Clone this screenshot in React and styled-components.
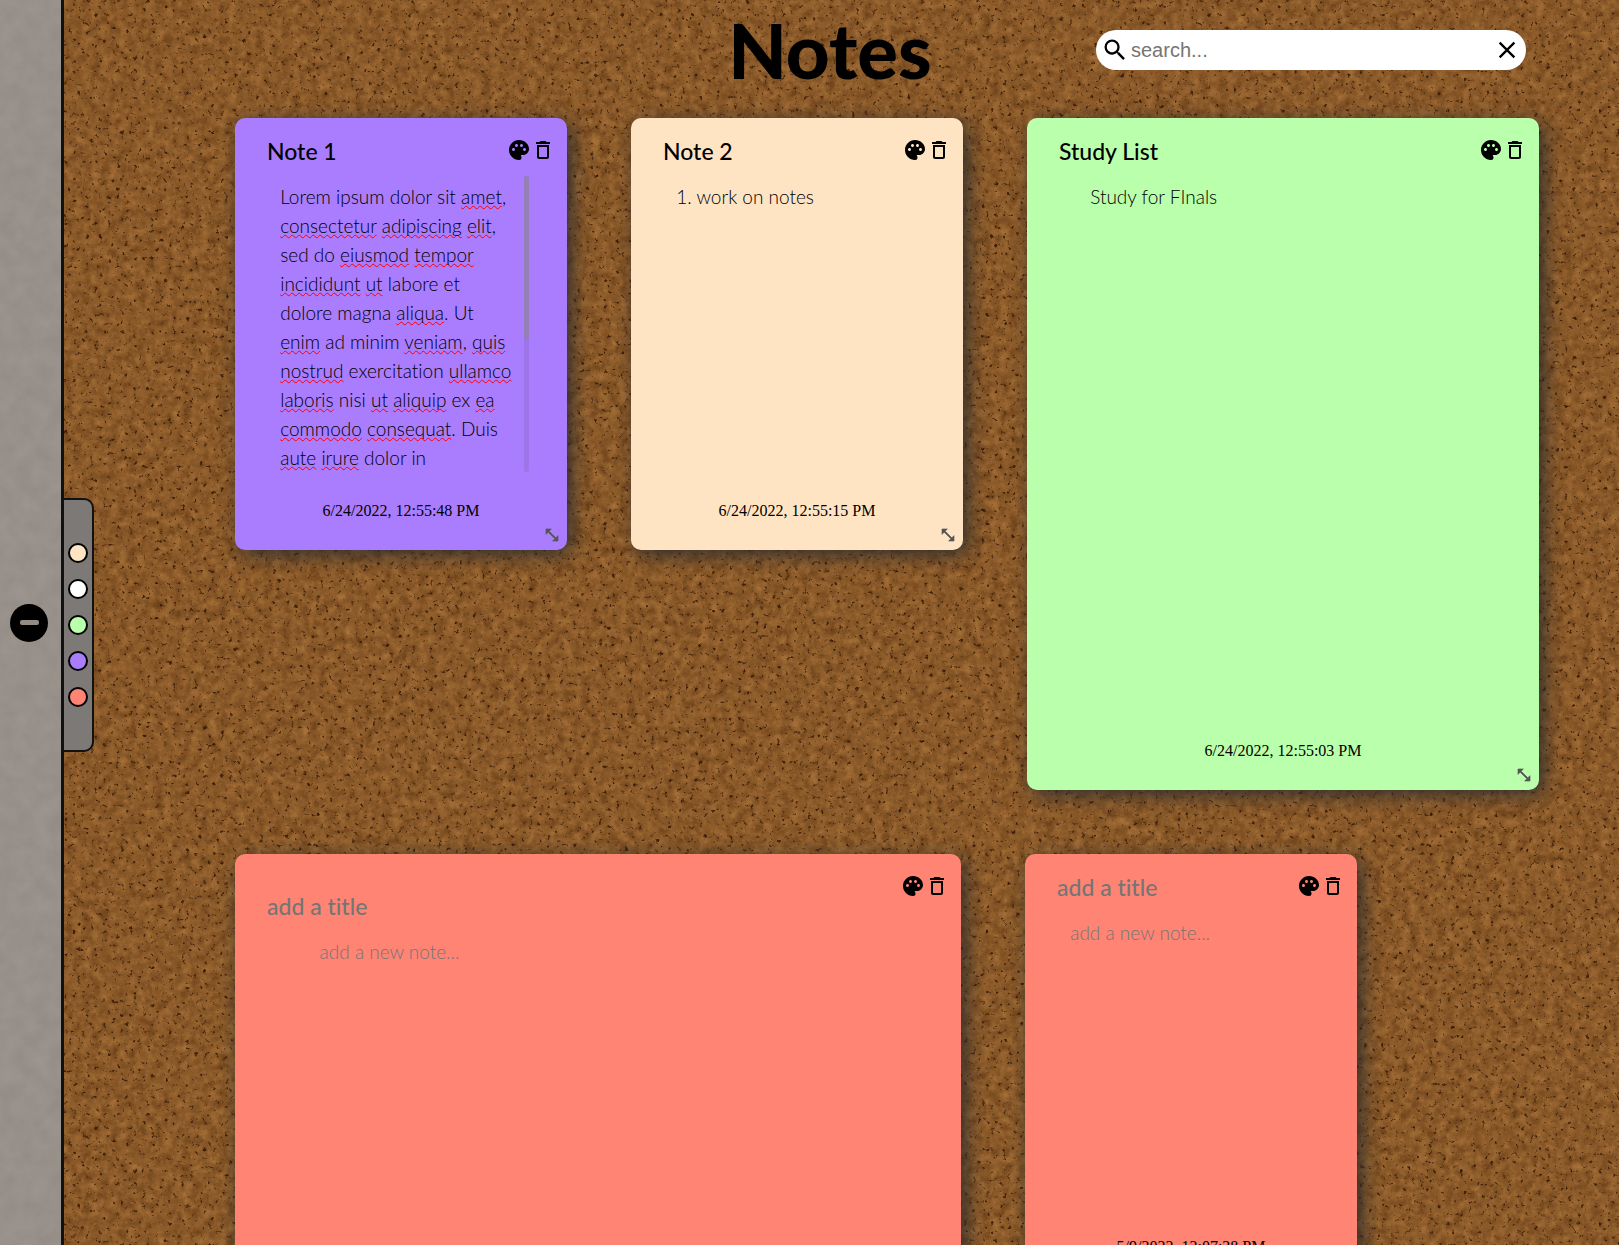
import React from "react";
import styled, { createGlobalStyle } from "styled-components";
import { MdPalette, MdDeleteOutline, MdSearch, MdClose } from "react-icons/md";

const GlobalStyle = createGlobalStyle`
  *, *::before, *::after { box-sizing: border-box; }
  body { margin: 0; background: #8a592b; }
  button, input, textarea { font: inherit; color: inherit; border: 0; margin: 0; padding: 0; background: none; }
  button { cursor: pointer; }
`;

const titleFont = `Lato, "Open Sans", sans-serif`;
const noteFont = `Lato, "Open Sans", sans-serif`;

const Page = styled.div`
  display: flex;
  height: 100vh;
  overflow: hidden;
  font-family: "Liberation Serif", serif;
  color: #000;
`;

const Sidebar = styled.aside`
  position: relative;
  z-index: 2;
  flex: none;
  width: 64px;
  display: flex;
  align-items: center;
  justify-content: center;
  padding-right: 4px;
  border-right: 3px solid #111;
`;

const Texture = styled.svg`
  position: absolute;
  inset: 0;
  z-index: -1;
  width: 100%;
  height: 100%;
`;

const ToggleButton = styled.button`
  display: flex;
  svg { display: block; width: 38px; height: 38px; }
`;

const SwatchTab = styled.div`
  position: absolute;
  left: 100%;
  top: 50%;
  transform: translateY(-50%);
  margin-top: 2px;
  margin-left: 3px;
  display: flex;
  flex-direction: column;
  align-items: center;
  justify-content: center;
  gap: 16px;
  width: 30px;
  height: 254px;
  padding-right: 1px;
  background: #7d7976;
  border: 2px solid #111;
  border-left: 0;
  border-radius: 0 10px 10px 0;
`;

const Swatch = styled.button`
  width: 20px;
  height: 20px;
  border: 2px solid #000;
  border-radius: 50%;
  background: ${(p) => p.$color};
`;

const Board = styled.main`
  position: relative;
  z-index: 1;
  flex: 1;
  min-width: 0;
`;

const Scroller = styled.div`
  height: 100%;
  overflow: auto;
  scrollbar-width: none;
`;

const Header = styled.header`
  display: grid;
  grid-template-columns: 1fr auto 1fr;
  align-items: center;
  height: 100px;
  margin-bottom: 18px;
  padding: 0 93px 0 70px;
`;

const Heading = styled.h1`
  grid-column: 2;
  margin: 0;
  font-family: ${titleFont};
  font-size: 76px;
  line-height: 100px;
  font-weight: 900;
`;

const SearchBar = styled.label`
  justify-self: end;
  display: flex;
  align-items: center;
  width: 430px;
  height: 40px;
  padding: 0 5px;
  border-radius: 20px;
  background: #fff;
  svg { display: block; flex: none; width: 28px; height: 28px; }
`;

const SearchInput = styled.input`
  flex: 1;
  min-width: 0;
  margin-left: 2px;
  font-family: "Liberation Sans", Arial, sans-serif;
  font-size: 20px;
  outline: 0;
  &::placeholder { color: #757575; }
`;

const ClearButton = styled.button`
  display: flex;
`;

const Notes = styled.section`
  display: flex;
  flex-wrap: wrap;
  align-items: flex-start;
  gap: 64px;
  padding: 0 64px 64px 171px;
`;

const Card = styled.article`
  position: relative;
  display: flex;
  flex-direction: column;
  width: ${(p) => p.$width}px;
  height: ${(p) => p.$height}px;
  border-radius: 10px;
  background: ${(p) => p.$color};
  box-shadow: 5px 5px 20px #2e2e2e;
`;

const CardHeader = styled.div`
  display: flex;
  align-items: flex-start;
  padding: 20px 12px 0 32px;
`;

const TitleInput = styled.input`
  flex: 1;
  min-width: 0;
  height: 26px;
  margin-top: ${(p) => (p.$low ? 19 : 0)}px;
  font-family: ${titleFont};
  font-size: 23px;
  line-height: 26px;
  font-weight: 500;
  font-variant-ligatures: none;
  outline: 0;
  &::placeholder { color: #757575; }
`;

const IconButton = styled.button`
  display: flex;
  svg { display: block; width: 24px; height: 24px; }
`;

const Body = styled.div`
  flex: 1;
  min-height: 0;
  display: flex;
  margin: 12px 10% 0;
  padding: 0 5px 0 12px;
`;

const noteText = `
  flex: 1;
  min-width: 0;
  padding-top: 6px;
  font-family: ${noteFont};
  font-size: 19px;
  line-height: 29px;
  font-weight: 300;
  font-variant-ligatures: none;
  outline: 0;
`;

const NoteArea = styled.textarea`
  ${noteText}
  resize: none;
  overflow: hidden;
  &::placeholder { color: #757575; }
`;

const NoteRich = styled.div`
  ${noteText}
  overflow: auto;
  white-space: nowrap;
  scrollbar-width: none;
`;

const Misspelt = styled.span`
  text-decoration: underline wavy #f00 1px;
  text-decoration-skip-ink: none;
`;

const Track = styled.div`
  width: 5px;
  border-radius: 3px;
  background: rgba(128, 100, 180, 0.3);
`;

const Thumb = styled.div`
  height: 55%;
  border-radius: 3px;
  background: #9380b5;
`;

const Stamp = styled.time`
  padding: 30px 0;
  font-size: 16px;
  line-height: 18px;
  text-align: center;
`;

const ResizeHandle = styled.button`
  position: absolute;
  right: 7px;
  bottom: 7px;
  display: flex;
  color: #555;
  cursor: nwse-resize;
  svg { display: block; width: 16px; height: 16px; }
`;

const COLORS = {
  peach: "#ffe4c4",
  white: "#ffffff",
  green: "#baffab",
  purple: "#aa7dff",
  coral: "#ff8473",
};

// Words marked with * are underlined by the spelling check.
const LOREM = [
  "Lorem ipsum dolor sit *amet,",
  "*consectetur *adipiscing *elit,",
  "sed do *eiusmod *tempor",
  "*incididunt *ut labore et",
  "dolore magna *aliqua. Ut",
  "*enim ad minim *veniam, *quis",
  "*nostrud exercitation *ullamco",
  "*laboris nisi *ut *aliquip ex *ea",
  "*commodo *consequat. Duis",
  "*aute *irure dolor in",
];

const NOTES = [
  { title: "Note 1", rich: LOREM, date: "6/24/2022, 12:55:48 PM", color: COLORS.purple, width: 332, height: 432 },
  { title: "Note 2", text: "1. work on notes", date: "6/24/2022, 12:55:15 PM", color: COLORS.peach, width: 332, height: 432 },
  { title: "Study List", text: "Study for FInals", date: "6/24/2022, 12:55:03 PM", color: COLORS.green, width: 512, height: 672 },
  { title: "", text: "", date: "5/9/2022, 12:07:31 PM", color: COLORS.coral, width: 726, height: 672, low: true },
  { title: "", text: "", date: "5/9/2022, 12:07:28 PM", color: COLORS.coral, width: 332, height: 432 },
];

function RichLine({ line }) {
  return (
    <div>
      {line.split(" ").map((word, i) => {
        const gap = i ? " " : "";
        if (word[0] !== "*") return gap + word;
        const [, core, tail] = word.match(/^\*(\w+)(\W*)$/);
        return (
          <React.Fragment key={i}>
            {gap}
            <Misspelt>{core}</Misspelt>
            {tail}
          </React.Fragment>
        );
      })}
    </div>
  );
}

function Note({ note }) {
  return (
    <Card $color={note.color} $width={note.width} $height={note.height}>
      <CardHeader>
        <TitleInput aria-label="Title" placeholder="add a title" defaultValue={note.title} $low={note.low} />
        <IconButton aria-label="Change color"><MdPalette /></IconButton>
        <IconButton aria-label="Delete note"><MdDeleteOutline /></IconButton>
      </CardHeader>
      <Body>
        {note.rich ? (
          <>
            <NoteRich role="textbox" aria-multiline="true" aria-label="Note" contentEditable suppressContentEditableWarning spellCheck={false}>
              {note.rich.map((line) => <RichLine key={line} line={line} />)}
            </NoteRich>
            <Track><Thumb /></Track>
          </>
        ) : (
          <NoteArea aria-label="Note" placeholder="add a new note..." defaultValue={note.text} spellCheck={false} />
        )}
      </Body>
      <Stamp>{note.date}</Stamp>
      <ResizeHandle aria-label="Resize note">
        <svg viewBox="0 0 24 24" fill="currentColor" stroke="currentColor">
          <path d="M3 11V3h8L7.71 6.29l10 10L21 13v8h-8l3.29-3.29-10-10z" />
        </svg>
      </ResizeHandle>
    </Card>
  );
}

function CorkTexture() {
  return (
    <Texture aria-hidden="true">
      <filter id="cork" x="0" y="0" width="100%" height="100%" colorInterpolationFilters="sRGB">
        <feTurbulence type="fractalNoise" baseFrequency="0.11" numOctaves="4" seed="4" result="grain" />
        <feColorMatrix in="grain" values="0.24 0.12 0 0 0.36  0.2 0.1 0 0 0.2  0.13 0.07 0 0 0.06  0 0 0 0 1" result="base" />
        <feTurbulence type="fractalNoise" baseFrequency="0.23" numOctaves="3" seed="23" result="speck" />
        <feColorMatrix in="speck" values="0 0 0 0 0.24  0 0 0 0 0.12  0 0 0 0 0.04  0 -6 0 0 2.15" result="dark" />
        <feColorMatrix in="speck" values="0 0 0 0 0.7  0 0 0 0 0.46  0 0 0 0 0.25  5 0 0 0 -3" result="chips" />
        <feComponentTransfer in="chips" result="light">
          <feFuncA type="linear" slope="0.4" />
        </feComponentTransfer>
        <feMerge>
          <feMergeNode in="base" />
          <feMergeNode in="light" />
          <feMergeNode in="dark" />
        </feMerge>
      </filter>
      <rect width="100%" height="100%" filter="url(#cork)" />
    </Texture>
  );
}

function PaperTexture() {
  return (
    <Texture aria-hidden="true">
      <filter id="paper" x="0" y="0" width="100%" height="100%" colorInterpolationFilters="sRGB">
        <feTurbulence type="fractalNoise" baseFrequency="0.06" numOctaves="4" seed="7" />
        <feColorMatrix values="0.05 0 0 0 0.57  0.05 0 0 0 0.54  0.05 0 0 0 0.515  0 0 0 0 1" />
      </filter>
      <rect width="100%" height="100%" filter="url(#paper)" />
    </Texture>
  );
}

export default function App() {
  return (
    <Page>
      <GlobalStyle />
      <Sidebar>
        <PaperTexture />
        <ToggleButton aria-label="Close palette">
          <svg viewBox="0 0 38 38">
            <circle cx="19" cy="19" r="19" />
            <rect x="10" y="16" width="19" height="5" rx="2" fill="#948b84" />
          </svg>
        </ToggleButton>
        <SwatchTab>
          {Object.entries(COLORS).map(([name, color]) => (
            <Swatch key={name} $color={color} aria-label={`Add ${name} note`} />
          ))}
        </SwatchTab>
      </Sidebar>
      <Board>
        <CorkTexture />
        <Scroller>
          <Header>
            <Heading>Notes</Heading>
            <SearchBar>
              <MdSearch />
              <SearchInput type="text" aria-label="Search notes" placeholder="search..." />
              <ClearButton aria-label="Clear search"><MdClose /></ClearButton>
            </SearchBar>
          </Header>
          <Notes>
            {NOTES.map((note, i) => <Note key={i} note={note} />)}
          </Notes>
        </Scroller>
      </Board>
    </Page>
  );
}
